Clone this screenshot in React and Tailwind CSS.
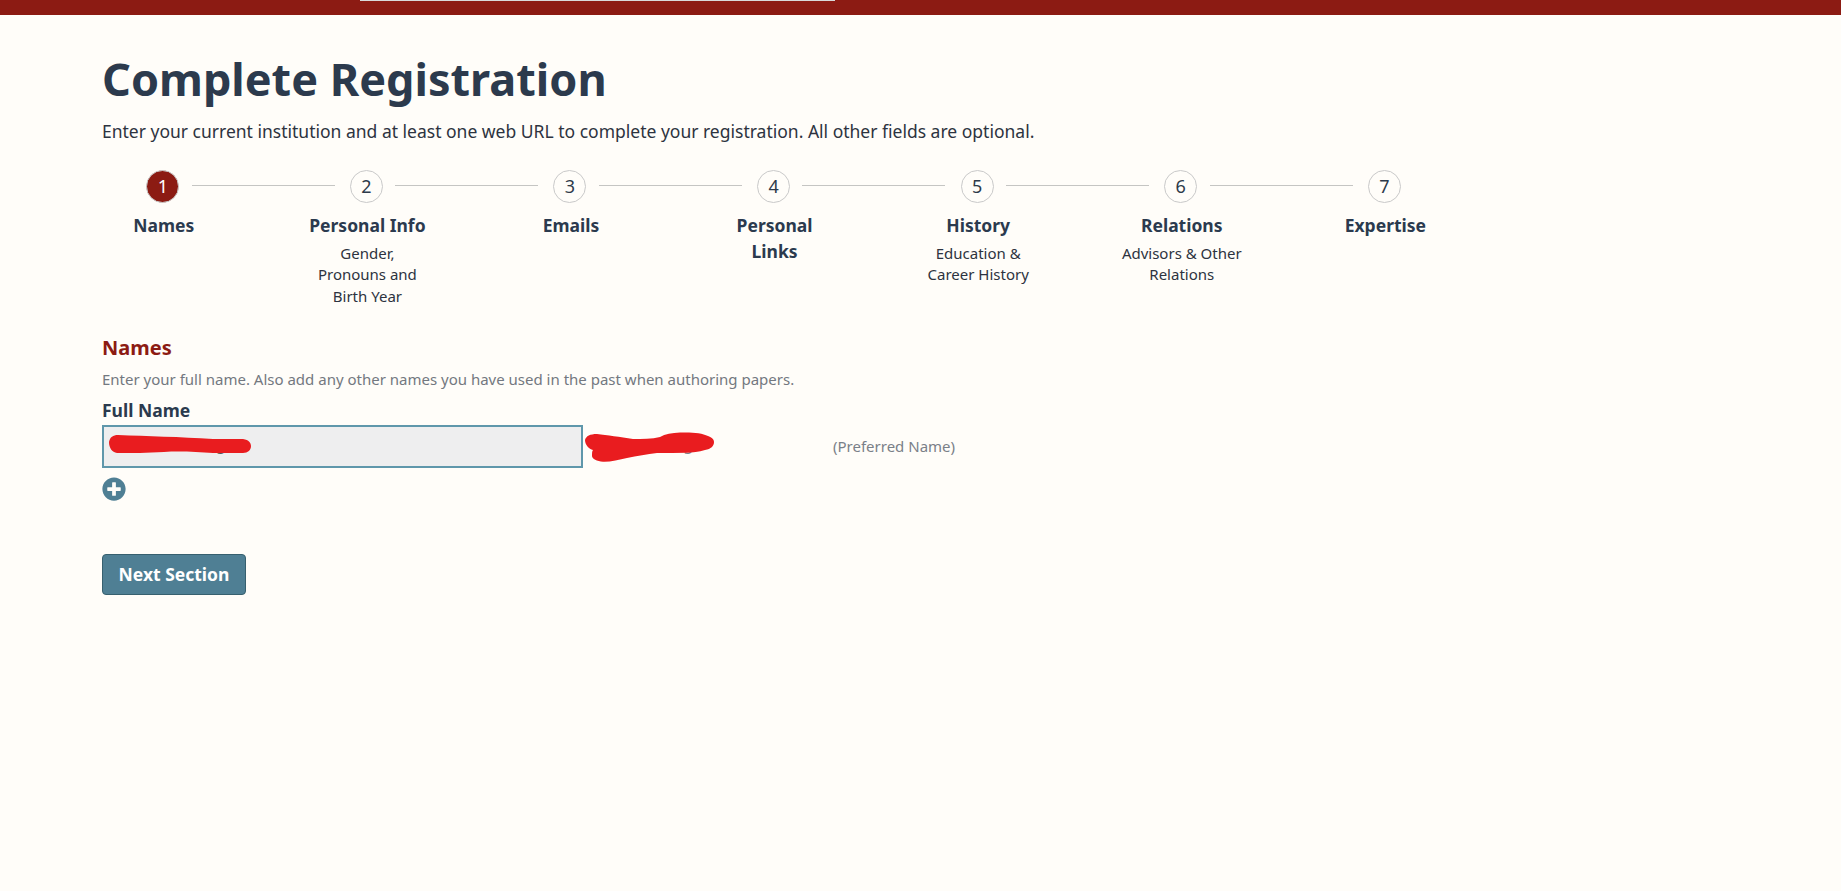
import React from 'react';
import { FaPlusCircle } from 'react-icons/fa';

const steps = [
  { title: 'Names' },
  { title: 'Personal Info', sub: 'Gender, Pronouns and Birth Year' },
  { title: 'Emails' },
  { title: 'Personal Links' },
  { title: 'History', sub: 'Education & Career History' },
  { title: 'Relations', sub: 'Advisors & Other Relations' },
  { title: 'Expertise' },
];

function Stepper() {
  return (
    <ol className="flex ml-[-41px] mt-[27px]">
      {steps.map((step, i) => (
        <li key={step.title} className="relative w-[203.6px] shrink-0 flex flex-col items-center">
          {/* connector to the next step */}
          {i < steps.length - 1 && (
            <span className="absolute left-[130.6px] top-[15px] w-[143px] h-px bg-[#c5c5c3]" />
          )}
          <div
            className={
              i === 0
                ? 'w-[33px] h-[33px] rounded-full border border-[#c9c9c9] bg-[#8c1b13] text-white flex items-center justify-center text-[18px]'
                : 'w-[33px] h-[33px] rounded-full border border-[#c9c9c9] text-[#2d3a4a] flex items-center justify-center text-[18px]'
            }
          >
            {i + 1}
          </div>
          <div className="w-[122px] ml-[2px] text-center mt-[9px] text-[17.5px] leading-[26px] font-bold text-[#2b3a4e]">
            {step.title}
          </div>
          {step.sub && (
            <div className="w-[122px] ml-[2px] text-center mt-[5px] text-[15px] leading-[21.5px] text-[#2d3340]">
              {step.sub}
            </div>
          )}
        </li>
      ))}
    </ol>
  );
}

function App() {
  return (
    <div className="min-h-[891px] bg-[#fffdf9] font-['Noto_Sans',sans-serif]">
      <header className="h-[15px] bg-[#8c1b13]">
        <div className="ml-[360px] w-[475px] h-px bg-[#d9d9d9]" />
      </header>

      <main className="px-[102px]">
        <h1 className="mt-[33px] text-[45px] leading-[62px] font-bold text-[#2c3a4d]">Complete Registration</h1>
        <p className="mt-[8.5px] text-[17.5px] leading-[24px] text-[#2d3340]">
          Enter your current institution and at least one web URL to complete your registration. All other fields are optional.
        </p>

        <Stepper />

        <section className="mt-[27.5px]">
          <h2 className="text-[20px] leading-[26px] font-bold text-[#8c1b13]">Names</h2>
          <p className="mt-[8px] text-[15px] leading-[20px] text-[#737880]">
            Enter your full name. Also add any other names you have used in the past when authoring papers.
          </p>
          <label className="block mt-[9px] text-[17.5px] leading-[24px] font-bold text-[#2b3a4e]">Full Name</label>

          <div className="relative flex items-center mt-[3px]">
            <div className="w-[481px] h-[43px] border-2 border-[#5f97ab] bg-[#eeeeef] pl-[112px] text-[16px] leading-[34px] text-[#555]">g</div>
            <div className="w-[250px] flex gap-[26px] pl-[70px] mb-[4px] text-[16px] text-[#7a8088]">
              <span>,</span>
              <span>g</span>
            </div>
            <span className="text-[15px] text-[#7a8088]">(Preferred Name)</span>

            {/* redaction scribbles over the name */}
            <svg className="absolute left-0 top-0 w-[640px] h-[44px] pointer-events-none" viewBox="0 0 640 44" fill="#e91c1f">
              <path d="M7 17 C8 12 11 10 16 10 C45 11 78 12 111 14 L141 14 C147 15 149 18 149 21 C149 25 146 28 141 28 L111 28 C95 27 78 26 62 27 C45 28 30 28 15 28 C10 27 7 23 7 17 Z" />
              <path d="M483 15 C484 11 488 9 495 9 C505 10 518 12 531 14 C540 14 550 14 558 12 C563 9 570 8 578 7.5 C590 7 600 8 606 11 C611 13 612 15 612 17 C612 21 609 24 603 25 C597 27 590 27.5 585 27.7 C575 28 565 28 555 28 C545 29 535 31 525 33 C517 35 508 37 501 36.7 C495 36 490 34 490 31 C490 28 490 26 491 25 C487 24 483 20 483 15 Z" />
            </svg>
          </div>

          <FaPlusCircle className="mt-[9px] w-[24px] h-[24px] text-[#4f7f94]" />

          <button className="block mt-[53px] w-[144px] h-[41px] rounded-[4px] border border-[#37606f] bg-[#4f7f94] text-white text-[17.5px] font-bold">
            Next Section
          </button>
        </section>
      </main>
    </div>
  );
}

export default App;
